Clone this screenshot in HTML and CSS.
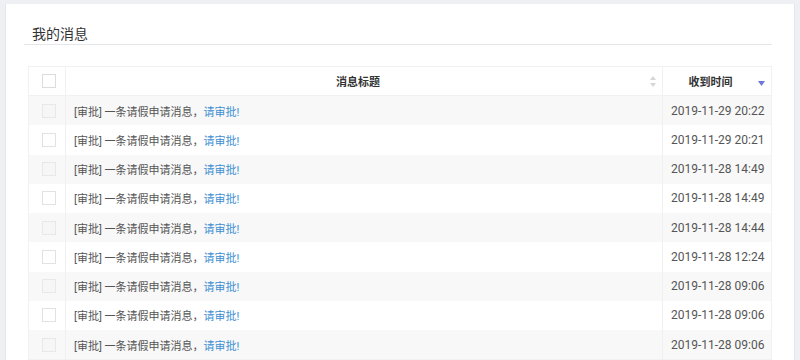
FILE: index.html
```html
<!DOCTYPE html>
<html lang="zh-CN">
<head>
  <meta charset="UTF-8">
  <title>我的消息</title>
  <meta name="viewport" content="width=device-width, initial-scale=1.0">
  <link rel="stylesheet" href="styles.css">
</head>
<body>
  <div class="page">
    <h2 class="title">我的消息</h2>

    <table class="msg-table">
      <colgroup>
        <col class="col-check">
        <col class="col-title">
        <col class="col-time">
      </colgroup>
      <thead>
        <tr>
          <th class="cell-check"><span class="box"></span></th>
          <th>
            <div class="th-inner">
              <span class="th-label">消息标题</span>
              <svg class="sort" width="6" height="11" viewBox="0 0 6 11">
                <path d="M3 0 L6 4 L0 4 Z" fill="#d6d6d6"/>
                <path d="M3 11 L6 7 L0 7 Z" fill="#d6d6d6"/>
              </svg>
            </div>
          </th>
          <th>
            <div class="th-inner">
              <span class="th-label">收到时间</span>
              <svg class="sort-down" width="7" height="5" viewBox="0 0 7 5">
                <path d="M0 0 L7 0 L3.5 5 Z" fill="#6f78d6"/>
              </svg>
            </div>
          </th>
        </tr>
      </thead>
      <tbody>
        <tr>
          <td class="cell-check"><span class="box"></span></td>
          <td>[审批] 一条请假申请消息，<a class="link">请审批!</a></td>
          <td class="cell-time">2019-11-29 20:22</td>
        </tr>
        <tr>
          <td class="cell-check"><span class="box"></span></td>
          <td>[审批] 一条请假申请消息，<a class="link">请审批!</a></td>
          <td class="cell-time">2019-11-29 20:21</td>
        </tr>
        <tr>
          <td class="cell-check"><span class="box"></span></td>
          <td>[审批] 一条请假申请消息，<a class="link">请审批!</a></td>
          <td class="cell-time">2019-11-28 14:49</td>
        </tr>
        <tr>
          <td class="cell-check"><span class="box"></span></td>
          <td>[审批] 一条请假申请消息，<a class="link">请审批!</a></td>
          <td class="cell-time">2019-11-28 14:49</td>
        </tr>
        <tr>
          <td class="cell-check"><span class="box"></span></td>
          <td>[审批] 一条请假申请消息，<a class="link">请审批!</a></td>
          <td class="cell-time">2019-11-28 14:44</td>
        </tr>
        <tr>
          <td class="cell-check"><span class="box"></span></td>
          <td>[审批] 一条请假申请消息，<a class="link">请审批!</a></td>
          <td class="cell-time">2019-11-28 12:24</td>
        </tr>
        <tr>
          <td class="cell-check"><span class="box"></span></td>
          <td>[审批] 一条请假申请消息，<a class="link">请审批!</a></td>
          <td class="cell-time">2019-11-28 09:06</td>
        </tr>
        <tr>
          <td class="cell-check"><span class="box"></span></td>
          <td>[审批] 一条请假申请消息，<a class="link">请审批!</a></td>
          <td class="cell-time">2019-11-28 09:06</td>
        </tr>
        <tr>
          <td class="cell-check"><span class="box"></span></td>
          <td>[审批] 一条请假申请消息，<a class="link">请审批!</a></td>
          <td class="cell-time">2019-11-28 09:06</td>
        </tr>
      </tbody>
    </table>
  </div>
</body>
</html>
```

FILE: styles.css
```css
body {
  margin: 0;
  padding: 0;
  background: #eef0f4;
  font-family: Roboto, "Noto Sans CJK SC", sans-serif;
  color: #555;
}

.page {
  margin: 4px 5px 0;
  height: 356px;
  overflow: hidden;
  background: #fff;
  border-left: 1px solid #e4e7ec;
  border-right: 1px solid #e4e7ec;
  padding: 20px 22px 0 18px;
  box-sizing: border-box;
}

.title {
  margin: 0;
  padding-left: 8px;
  font-size: 14px;
  font-weight: normal;
  line-height: 20px;
  color: #333;
  border-bottom: 1px solid #e4e6ea;
}

.msg-table {
  margin: 21px 0 0 4px;
  width: 744px;
  border-collapse: collapse;
  table-layout: fixed;
  font-size: 11px;
  border: 1px solid #f1f1f1;
}

.col-check { width: 37px; }
.col-time { width: 109px; }

.msg-table th {
  height: 28px;
  padding: 0;
  background: #fff;
  color: #333;
  font-weight: bold;
  border-bottom: 1px solid #f1f1f1;
  border-left: 1px solid #f1f1f1;
}

.th-inner {
  display: flex;
  align-items: center;
  padding-right: 6px;
}

.th-label {
  flex: 1;
  text-align: center;
}

.sort-down {
  margin-top: 4px;
}

.msg-table td {
  height: 29.25px;
  padding: 0 8px;
  border-left: 1px solid #f0f0f0;
  white-space: nowrap;
}

.msg-table tbody tr:nth-child(odd) td {
  background: #f8f8f8;
}

.msg-table .cell-check {
  padding: 0 0 0 4px;
  text-align: center;
  border-left: none;
}

.box {
  display: inline-block;
  width: 12px;
  height: 12px;
  border: 1px solid #e2e2e2;
  background: #fff;
  vertical-align: middle;
}

tbody tr:nth-child(odd) .box {
  background: #f6f6f6;
  border-color: #e8e8e8;
}

thead .box {
  border-color: #dcdcdc;
}

.cell-time {
  text-align: right;
  font-size: 12px;
}

.link {
  color: #3d8ed3;
  cursor: pointer;
}
```
